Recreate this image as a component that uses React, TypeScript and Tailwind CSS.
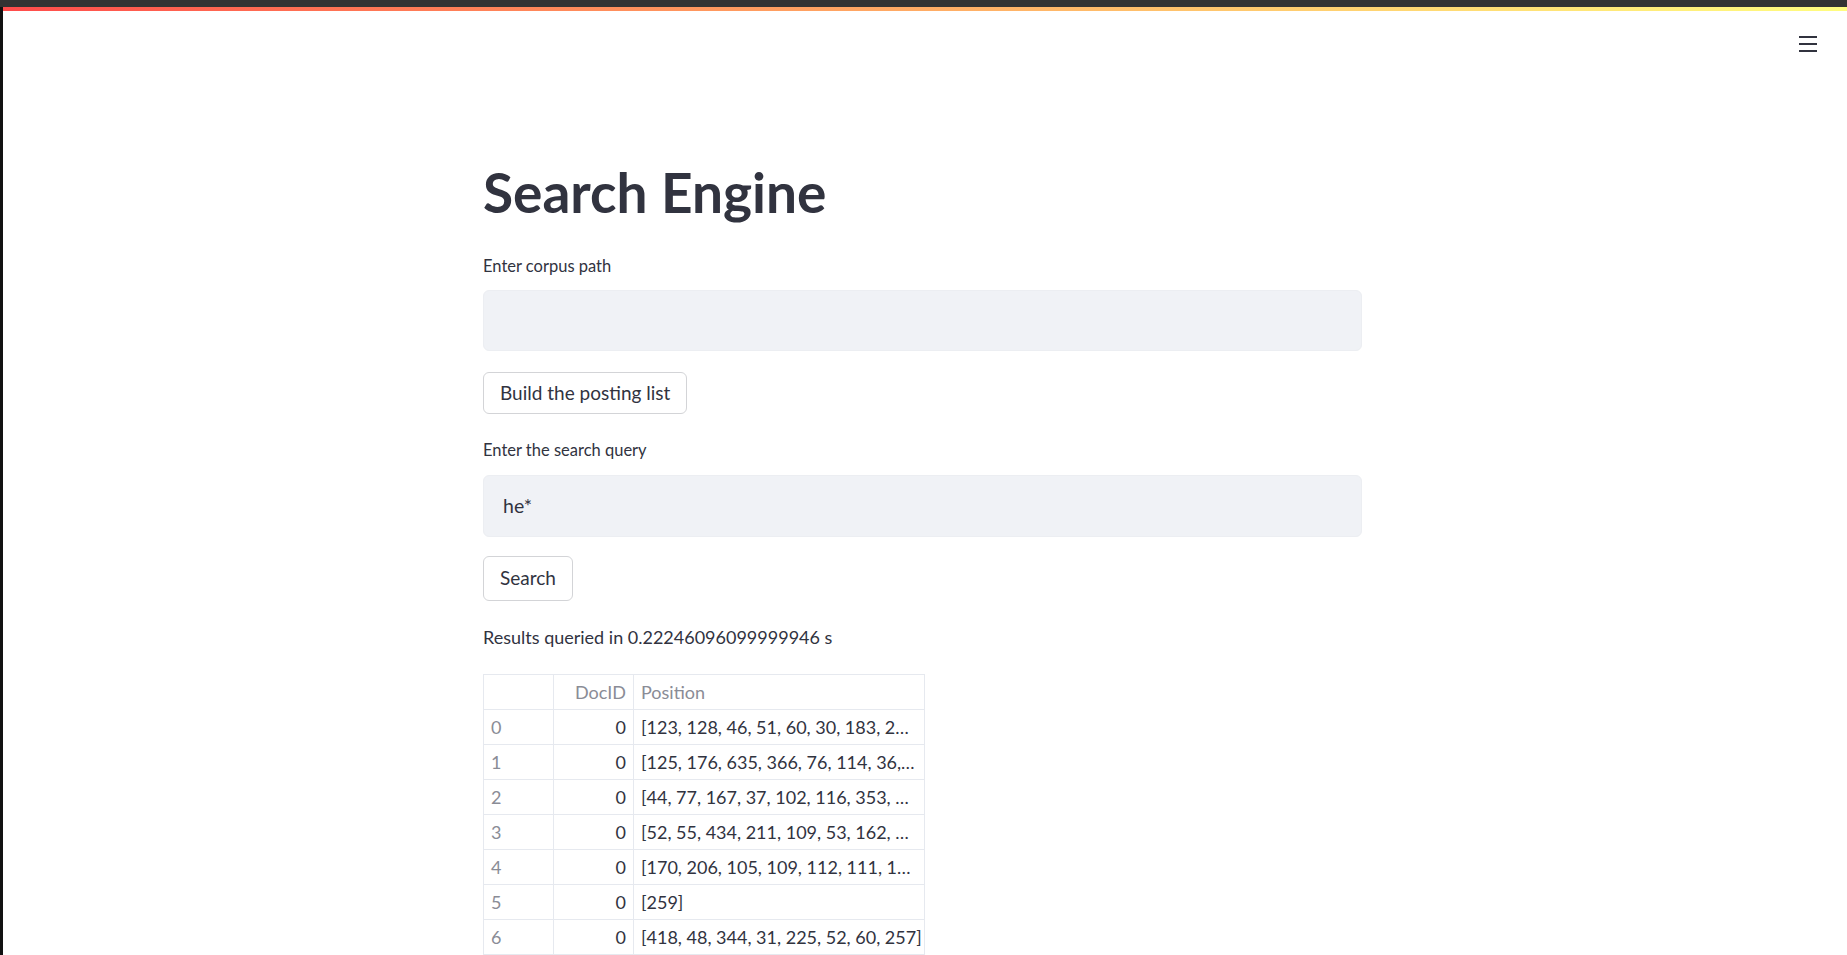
import React from "react";

const rows: [string, string, string][] = [
  ["0", "0", "[123, 128, 46, 51, 60, 30, 183, 2…"],
  ["1", "0", "[125, 176, 635, 366, 76, 114, 36,…"],
  ["2", "0", "[44, 77, 167, 37, 102, 116, 353, …"],
  ["3", "0", "[52, 55, 434, 211, 109, 53, 162, …"],
  ["4", "0", "[170, 206, 105, 109, 112, 111, 1…"],
  ["5", "0", "[259]"],
  ["6", "0", "[418, 48, 344, 31, 225, 52, 60, 257]"],
];

export default function App() {
  return (
    <div
      className="w-full h-[955px] overflow-hidden bg-white flex flex-col text-[#31333f]"
      style={{ fontFamily: "Lato, 'Noto Sans', sans-serif" }}
    >
      <div className="h-[7px] bg-[#333333] shrink-0" />
      <div className="flex flex-1 min-h-0">
        <div className="w-[3px] bg-[#111111] shrink-0" />
        <div className="flex-1 flex flex-col relative">
          <div className="h-[4px] shrink-0 bg-gradient-to-r from-[#ff4b4b] to-[#fffd80]" />
          <button className="absolute right-[30px] top-[29px] w-[18px] h-[16px] flex flex-col justify-between">
            <span className="block h-[2px] w-full bg-[#31333f]" />
            <span className="block h-[2px] w-full bg-[#31333f]" />
            <span className="block h-[2px] w-full bg-[#31333f]" />
          </button>
          <div className="pl-[480px] pt-[151px] w-[1359px] flex flex-col">
            <h1 className="text-[55px] font-bold leading-[60px] text-[#31333f]">
              Search Engine
            </h1>
            <label className="mt-[33px] text-[16.5px] leading-[22px]">Enter corpus path</label>
            <div className="mt-[13px] h-[61px] rounded-[6px] bg-[#f0f2f6] border border-[#eceef2]" />
            <div className="mt-[21px]">
              <button className="h-[42px] px-[16px] rounded-[6px] border border-[#d3d4d7] bg-white text-[19px]">
                Build the posting list
              </button>
            </div>
            <label className="mt-[25px] text-[16.5px] leading-[22px]">Enter the search query</label>
            <div className="mt-[14px] h-[62px] rounded-[6px] bg-[#f0f2f6] border border-[#eceef2] flex items-center px-[19px] text-[19.5px]">
              he*
            </div>
            <div className="mt-[19px]">
              <button className="h-[45px] px-[16px] rounded-[6px] border border-[#d3d4d7] bg-white text-[19px]">
                Search
              </button>
            </div>
            <p className="mt-[23px] text-[18px] leading-[26px]">Results queried in 0.22246096099999946 s</p>
            <table className="mt-[24px] w-[441px] border-collapse text-[18px] table-fixed">
              <colgroup>
                <col className="w-[70px]" />
                <col className="w-[80px]" />
                <col className="w-[291px]" />
              </colgroup>
              <thead>
                <tr className="h-[35px]">
                  <th className="border border-[#e6e9ef]" />
                  <th className="border border-[#e6e9ef] text-right font-normal text-[#8a8c96] px-[7px]">DocID</th>
                  <th className="border border-[#e6e9ef] text-left font-normal text-[#8a8c96] px-[7px]">Position</th>
                </tr>
              </thead>
              <tbody>
                {rows.map((r) => (
                  <tr key={r[0]} className="h-[35px]">
                    <td className="border border-[#e6e9ef] px-[7px] text-[#8a8c96]">{r[0]}</td>
                    <td className="border border-[#e6e9ef] px-[7px] text-right">{r[1]}</td>
                    <td className="border border-[#e6e9ef] px-[7px] whitespace-nowrap overflow-hidden">{r[2]}</td>
                  </tr>
                ))}
              </tbody>
            </table>
          </div>
        </div>
      </div>
    </div>
  );
}
